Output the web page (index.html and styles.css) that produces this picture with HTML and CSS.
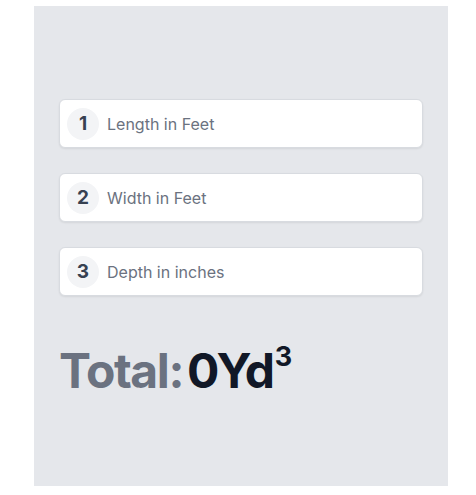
FILE: index.html
```html
<!DOCTYPE html>
<html>
<head>
<meta charset="utf-8">
<link rel="stylesheet" href="styles.css">
</head>
<body>
<div class="panel">
  <div class="fields">
    <div class="field"><span class="num">1</span><span class="label">Length in Feet</span></div>
    <div class="field"><span class="num">2</span><span class="label">Width in Feet</span></div>
    <div class="field"><span class="num">3</span><span class="label">Depth in inches</span></div>
  </div>
  <div class="total"><span class="total-label">Total:</span><span class="total-value">0Yd<sup class="cube">3</sup></span></div>
</div>
</body>
</html>
```
FILE: styles.css
```css
* { box-sizing: border-box; }
html, body { margin: 0; padding: 0; background: #ffffff; }
body { font-family: Inter, "Noto Sans", sans-serif; padding: 6px 0 0 34px; }
.panel {
  width: 414px;
  height: 480px;
  background: #e5e7eb;
  padding: 93px 25px 0 25px;
}
.fields { display: flex; flex-direction: column; gap: 25px; }
.field {
  height: 49px;
  background: #ffffff;
  border: 1px solid #d8dbe0;
  border-radius: 6px;
  box-shadow: 0 1px 2px rgba(0,0,0,0.08);
  display: flex;
  align-items: center;
  padding-left: 7px;
}
.num {
  width: 32px; height: 32px;
  border-radius: 50%;
  background: #f3f4f6;
  display: flex; align-items: center; justify-content: center;
  font-weight: 700; font-size: 19px; color: #374151;
}
.label { margin-left: 8px; font-size: 16px; color: #6b7280; }
.total { margin-top: 51px; font-size: 48px; line-height: 48px; font-weight: 700; letter-spacing: -1.4px; }
.total-label { color: #6b7280; margin-right: 4px; }
.total-value { color: #111827; }
.cube { font-size: 27px; line-height: 0; vertical-align: 0; position: relative; top: -22px; letter-spacing: 0; margin-left: 1px; }
```
